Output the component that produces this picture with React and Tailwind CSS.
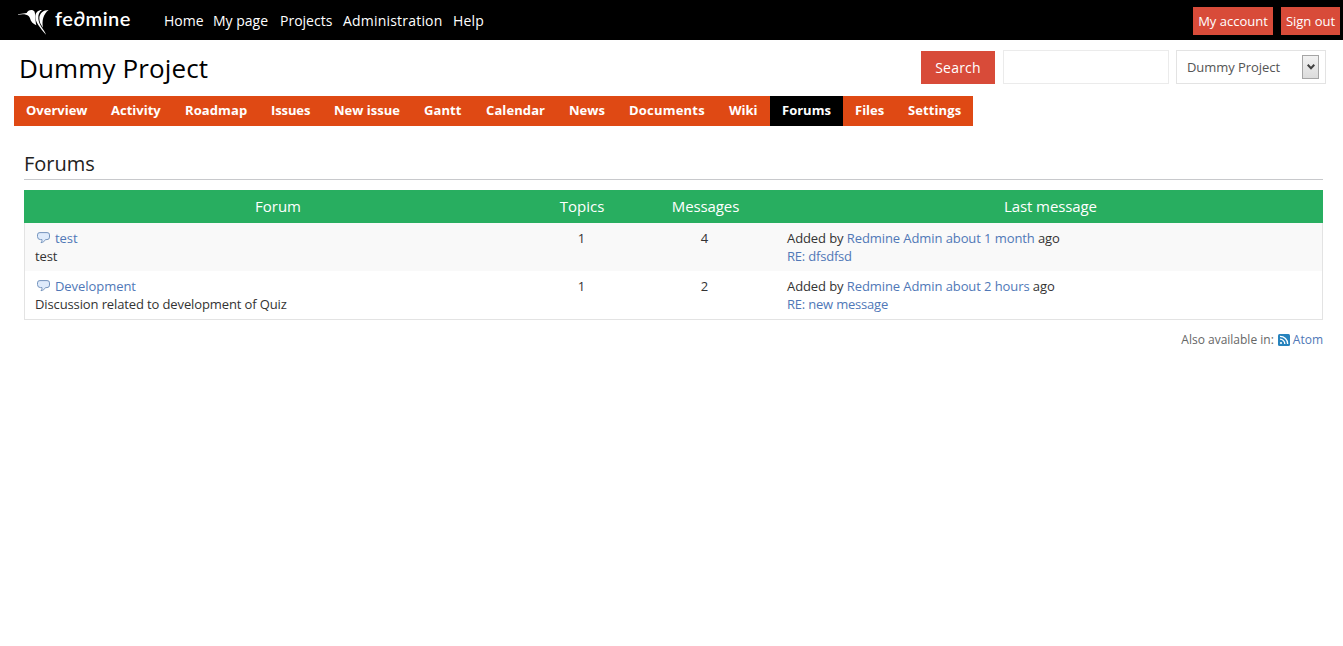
import React from "react";

const topLinks = [
  ["Home", "w-[49px]"],
  ["My page", "w-[67px]"],
  ["Projects", "w-[63px]"],
  ["Administration", "w-[110px] tracking-[0.2px]"],
  ["Help", "w-[40px] tracking-[0.2px]"],
];

const tabs = [
  ["Overview", "w-[85px]"],
  ["Activity", "w-[74px]"],
  ["Roadmap", "w-[86px] tracking-[0.1px]"],
  ["Issues", "w-[63px] tracking-[-0.1px]"],
  ["New issue", "w-[90px]"],
  ["Gantt", "w-[62px] tracking-[0.1px]"],
  ["Calendar", "w-[83px] tracking-[0.1px]"],
  ["News", "w-[60px]"],
  ["Documents", "w-[100px] tracking-[0.2px]"],
  ["Wiki", "w-[53px]"],
  ["Forums", "w-[73px]"],
  ["Files", "w-[53px]"],
  ["Settings", "w-[77px] tracking-[0.1px]"],
];

const forums = [
  { name: "test", text: "test", topics: 1, messages: 4, when: "about 1 month", last: "RE: dfsdfsd" },
  { name: "Development", text: "Discussion related to development of Quiz", topics: 1, messages: 2, when: "about 2 hours", last: "RE: new message" },
];

function Bird() {
  return (
    <svg className="mt-[9px] h-[27px] w-8 shrink-0" viewBox="12 15 96 81" fill="#fff">
      <path d="M10 31 38 27C42 18 54 15 61 22C65 30 63 47 67 64C57 60 50 52 48 43C46 37 43 33 36 32C28 30 18 31 10 33Z" />
      <path d="M84 18C72 18 64 25 64 38C65 56 76 68 96 92C91 76 75 65 73 44C72 32 76 23 84 18Z" />
      <path d="M104 18C88 18 76 28 76 43C76 54 80 62 87 71C83 50 88 30 104 18Z" />
    </svg>
  );
}

function Bubble() {
  return (
    <svg className="mt-[3px] h-3 w-[13px] shrink-0" viewBox="0 0 13 12">
      <path d="M3 .6h7a2.300 2.300 0 0 1 2.500 2.300v2.200a2.500 2.500 0 0 1-2.500 2.500H8.500C7.600 9.200 6.200 10.300 4 10.700 4.900 9.700 5.100 8.700 5 7.600H3.500A3 3 0 0 1 .5 4.600V2.900A2.300 2.300 0 0 1 3 .6Z" fill="#dfebfb" stroke="#7594bd" />
    </svg>
  );
}

function Feed() {
  return (
    <svg className="h-3 w-3 shrink-0" viewBox="0 0 12 12" fill="none">
      <rect width="12" height="12" rx="1.500" fill="#2783bd" />
      <g stroke="#fff" strokeWidth="1.300">
        <path d="M2 2.300A7.700 7.700 0 0 1 9.700 10" />
        <path d="M2 5.200A4.800 4.800 0 0 1 6.800 10" />
      </g>
      <circle cx="3" cy="9" r="1.100" fill="#fff" />
    </svg>
  );
}

export default function App() {
  return (
    <div className="h-[646px] w-[1343px] overflow-hidden bg-white font-['Open_Sans',sans-serif] text-[13px] leading-[18px] text-[#333]">
      <header className="flex h-10 bg-black pl-[18px] pr-[3px] text-white">
        <Bird />
        <div className="ml-[5px] w-[109px] whitespace-nowrap font-['Lato',sans-serif] text-[20px] font-semibold tracking-[0.5px] leading-[37px]">fe∂mine</div>
        <nav className="flex text-[14px] leading-[41px]">
          {topLinks.map(([t, w]) => (
            <a key={t} className={"whitespace-nowrap " + w}>{t}</a>
          ))}
        </nav>
        <div className="ml-auto mt-[7px] flex gap-2 text-center leading-7">
          <a className="h-7 w-20 bg-[#d84b39]">My account</a>
          <a className="h-7 w-[59px] bg-[#d84b39]">Sign out</a>
        </div>
      </header>

      <div className="flex h-14 items-start pl-[19px] pr-[17px]">
        <h1 className="mt-[10px] whitespace-nowrap text-[26px] leading-9 tracking-[0.13px] text-black">Dummy Project</h1>
        <div className="ml-auto mt-[10px] flex">
          <button className="mt-px h-[33px] w-[74px] bg-[#d84b39] text-[14px] tracking-[0.2px] text-white">Search</button>
          <div className="ml-2 h-[34px] w-[166px] border border-[#ebebeb]" />
          <div className="ml-[7px] flex h-[34px] w-[150px] items-center justify-between border border-[#e3e3e3] pl-[10px] pr-[6px] text-[#555]">
            <span className="tracking-[-0.06px]">Dummy Project</span>
            <span className="flex h-6 w-[17px] items-center justify-center border border-[#a5a5a5] bg-gradient-to-b from-[#f2f2f2] to-[#dcdcdc]">
              <svg className="h-[6px] w-[8px]" viewBox="0 0 8 6" fill="none" stroke="#404040" strokeWidth="2">
                <path d="m.7.8 3.300 3.500L7.300.8" />
              </svg>
            </span>
          </div>
        </div>
      </div>

      <nav className="ml-[14px] flex h-[30px] w-[959px] bg-[#df4914] text-[13px] font-bold leading-[29px] text-white">
        {tabs.map(([t, w]) => (
          <a key={t} className={"shrink-0 whitespace-nowrap pl-3 " + w + (t === "Forums" ? " bg-black" : "")}>{t}</a>
        ))}
      </nav>

      <main className="ml-6 w-[1299px] pt-[23px]">
        <h2 className="h-[31px] border-b border-[#c8c9cc] text-[20px] leading-[29px] text-[#222]">Forums</h2>
        <section className="mt-[10px]">
          <div className="flex h-[33px] bg-[#28ae60] text-center text-[15px] leading-[33px] text-white">
            <div className="w-[508px]">Forum</div>
            <div className="w-[100px]">Topics</div>
            <div className="w-[147px] tracking-[-0.1px]">Messages</div>
            <div className="w-[543px] tracking-[-0.1px]">Last message</div>
          </div>
          <div className="border border-t-0 border-[#e3e3e3]">
            {forums.map((f, i) => (
              <div key={f.name} className={"flex h-12 pt-[6px] " + (i ? "bg-white" : "bg-[#f9f9f9]")}>
                <div className="w-[507px] pl-[10px]">
                  <div className="flex pl-[2px]">
                    <Bubble />
                    <a className="ml-[5px] tracking-[-0.06px] text-[#5078b7]">{f.name}</a>
                  </div>
                  <div className="tracking-[-0.12px]">{f.text}</div>
                </div>
                <div className="w-[99px] text-center">{f.topics}</div>
                <div className="w-[147px] text-center">{f.messages}</div>
                <div className="pl-[9px] tracking-[-0.09px]">
                  <div>
                    Added by <a className="text-[#5078b7]">Redmine Admin</a> <a className="text-[#5078b7]">{f.when}</a> ago
                  </div>
                  <a className="tracking-[-0.2px] text-[#5078b7]">{f.last}</a>
                </div>
              </div>
            ))}
          </div>
        </section>
        <p className="mt-[11px] flex items-center justify-end text-[12px] text-[#666]">
          Also available in:
          <span className="ml-1 mr-[3px] flex"><Feed /></span>
          <a className="text-[#5078b7]">Atom</a>
        </p>
      </main>
    </div>
  );
}
